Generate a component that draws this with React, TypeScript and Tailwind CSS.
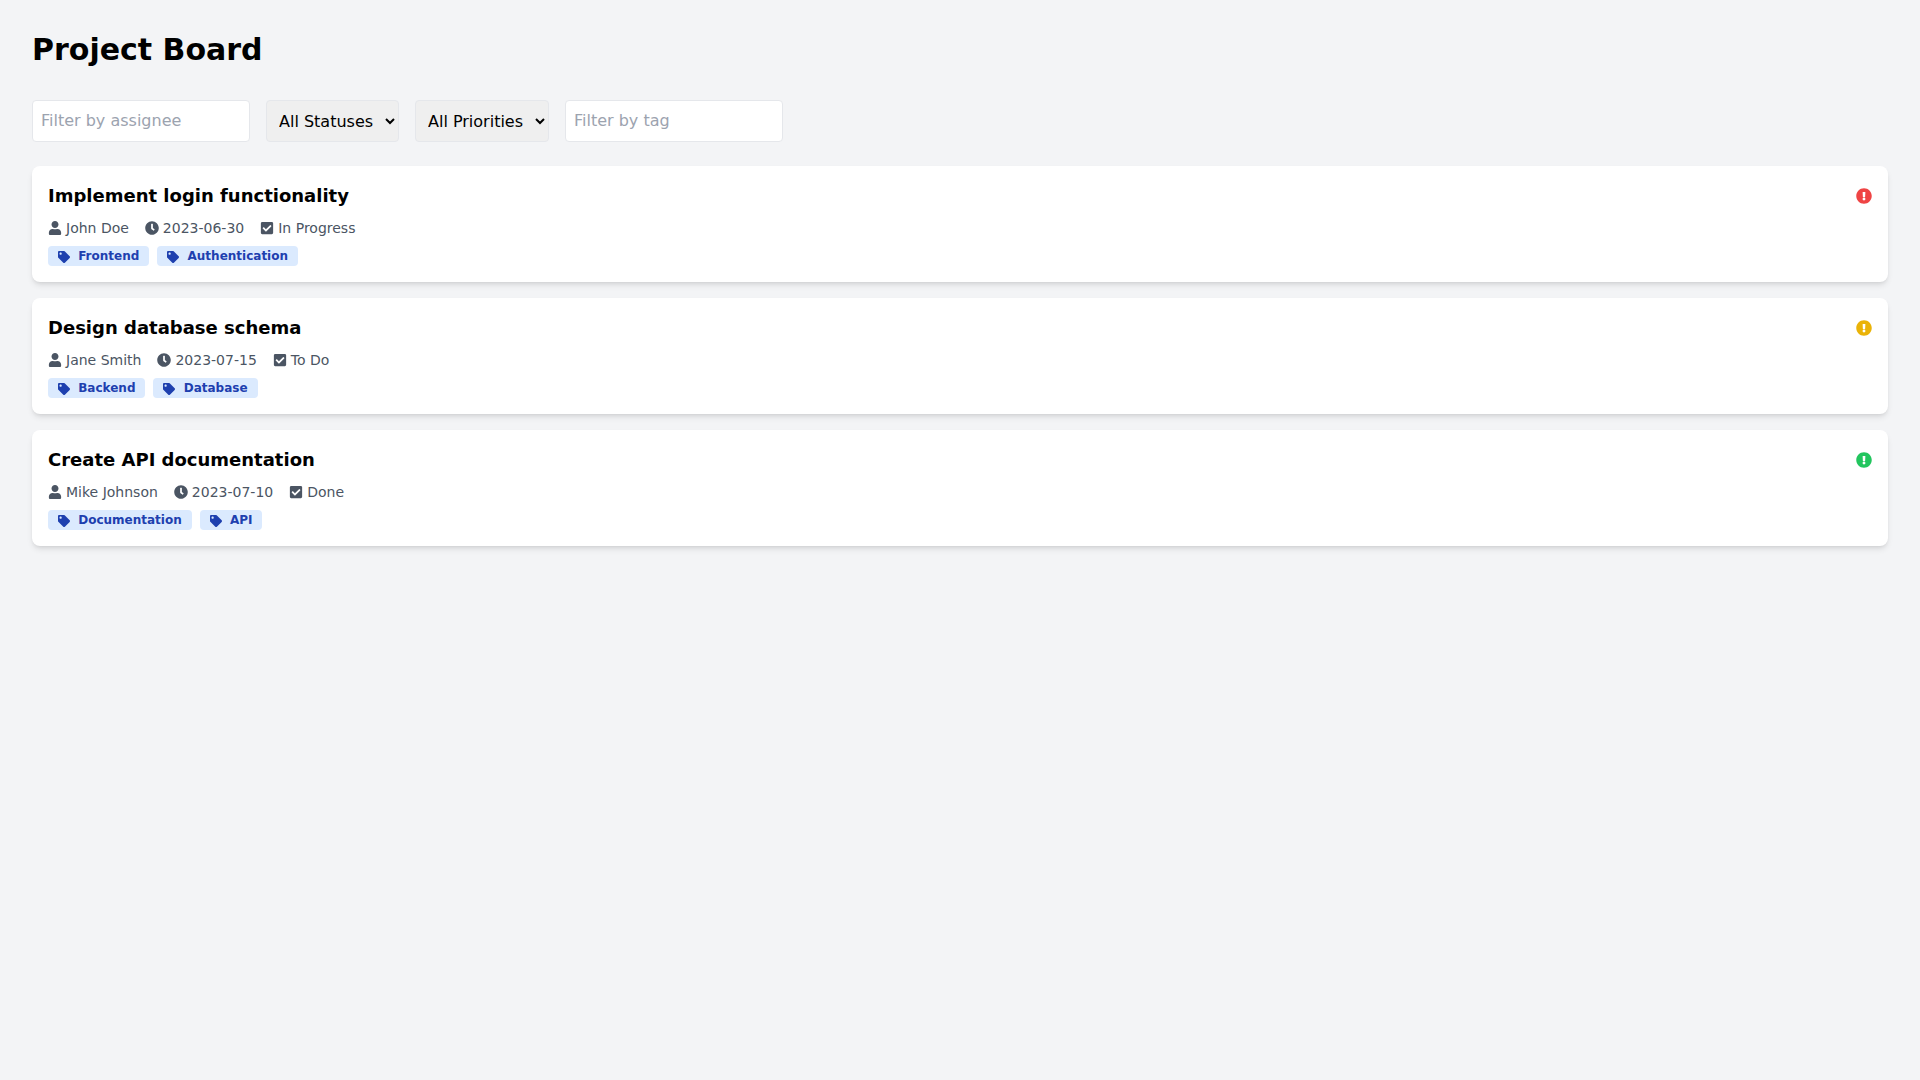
import React from "react";
import { FaUser, FaClock, FaCheckSquare, FaTag, FaExclamationCircle } from "react-icons/fa";

type Task = {
  title: string;
  assignee: string;
  due: string;
  status: string;
  priorityClass: string;
  tags: string[];
};

const tasks: Task[] = [
  { title: "Implement login functionality", assignee: "John Doe", due: "2023-06-30", status: "In Progress", priorityClass: "text-[#ef4444]", tags: ["Frontend", "Authentication"] },
  { title: "Design database schema", assignee: "Jane Smith", due: "2023-07-15", status: "To Do", priorityClass: "text-[#eab308]", tags: ["Backend", "Database"] },
  { title: "Create API documentation", assignee: "Mike Johnson", due: "2023-07-10", status: "Done", priorityClass: "text-[#22c55e]", tags: ["Documentation", "API"] },
];

function TaskCard({ task }: { task: Task }) {
  return (
    <div className="mb-4 rounded-lg bg-white p-4 shadow-md">
      <div className="mb-2 flex items-center justify-between">
        <h3 className="text-lg font-semibold">{task.title}</h3>
        <FaExclamationCircle className={task.priorityClass} />
      </div>
      <div className="mb-2 flex items-center text-sm text-[#4b5563]">
        <FaUser className="mr-1" />
        <span className="mr-4">{task.assignee}</span>
        <FaClock className="mr-1" />
        <span className="mr-4">{task.due}</span>
        <FaCheckSquare className="mr-1" />
        <span>{task.status}</span>
      </div>
      <div className="flex flex-wrap">
        {task.tags.map((tag) => (
          <span key={tag} className="mr-2 rounded bg-[#dbeafe] px-2.5 py-0.5 text-xs font-semibold text-[#1e40af]">
            <FaTag className="mr-1 inline" /> {tag}
          </span>
        ))}
      </div>
    </div>
  );
}

export default function App() {
  return (
    <div className="min-h-screen bg-[#f3f4f6] p-8 font-['DejaVu_Sans',sans-serif] text-black">
      <h1 className="mb-8 text-3xl font-bold">Project Board</h1>
      <div className="mb-6 flex space-x-4">
        <input type="text" placeholder="Filter by assignee" className="rounded border border-[#e5e7eb] bg-white p-2 placeholder:text-[#9ca3af]" />
        <select className="rounded border border-[#e5e7eb] bg-[#efefef] p-2">
          <option>All Statuses</option>
          <option>To Do</option>
          <option>In Progress</option>
          <option>Done</option>
        </select>
        <select className="rounded border border-[#e5e7eb] bg-[#efefef] p-2">
          <option>All Priorities</option>
          <option>Low</option>
          <option>Medium</option>
          <option>High</option>
        </select>
        <input type="text" placeholder="Filter by tag" className="rounded border border-[#e5e7eb] bg-white p-2 placeholder:text-[#9ca3af]" />
      </div>
      <div>
        {tasks.map((task) => (
          <TaskCard key={task.title} task={task} />
        ))}
      </div>
    </div>
  );
}
